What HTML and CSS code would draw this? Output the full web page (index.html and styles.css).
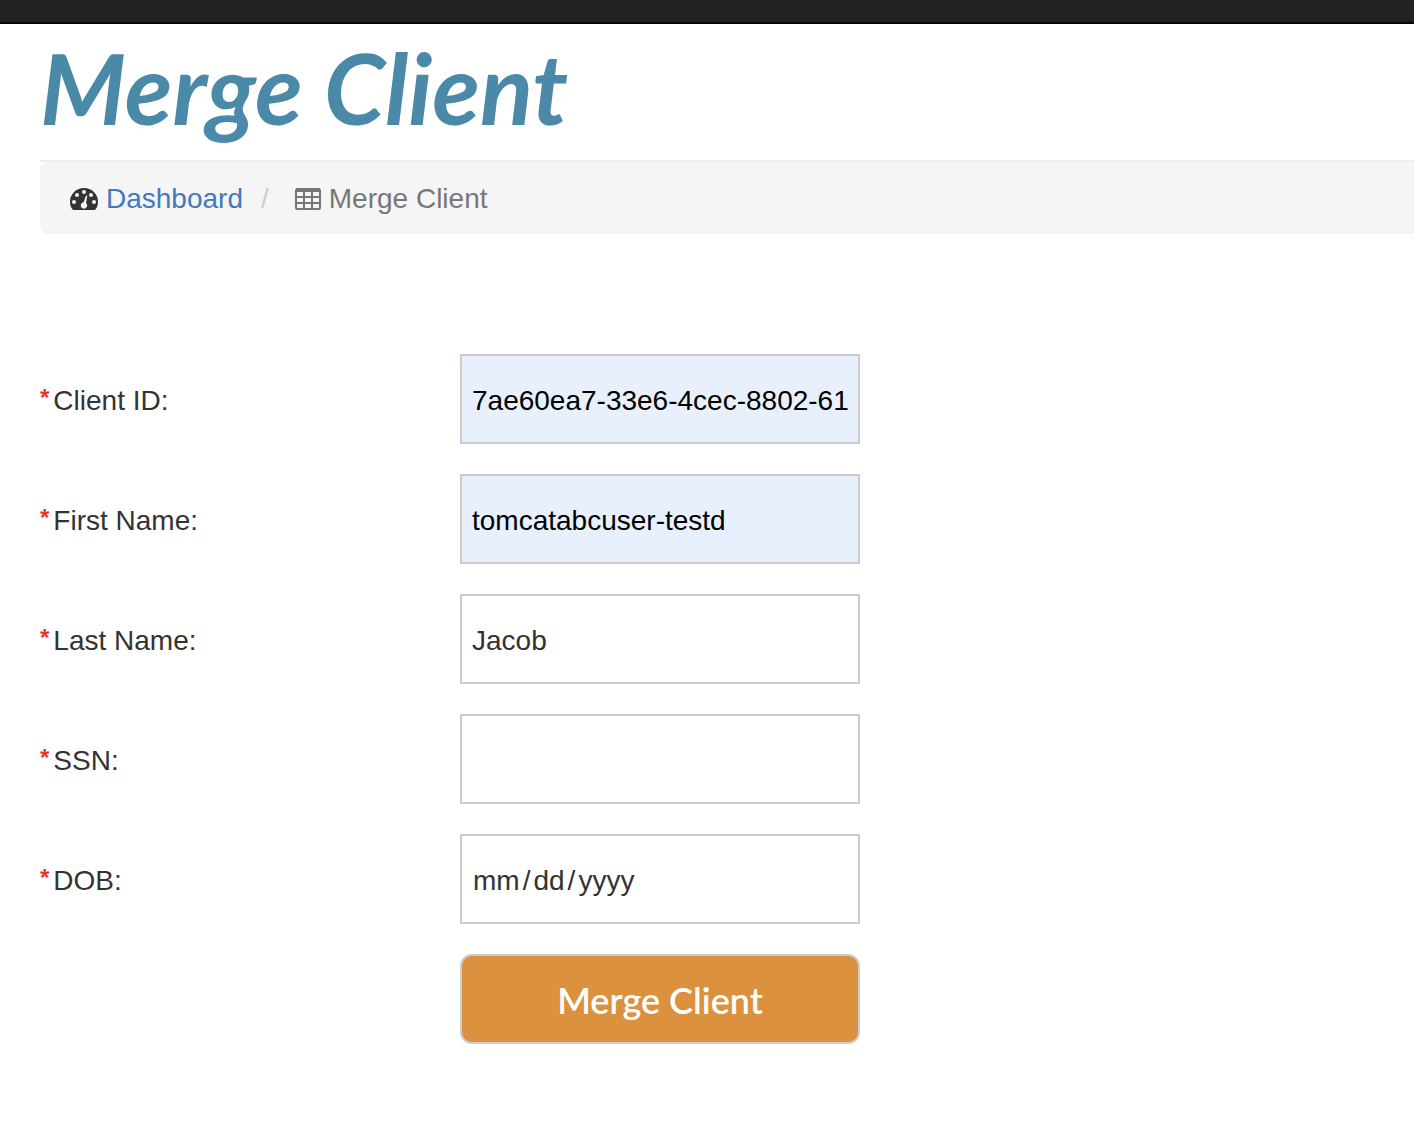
FILE: index.html
```html
<!DOCTYPE html>
<html lang="en">
<head>
<meta charset="utf-8">
<meta name="viewport" content="width=device-width, initial-scale=1">
<title>Merge Client</title>
<link rel="stylesheet" href="styles.css">
</head>
<body>
<header class="navbar"></header>
<main class="content">
  <h1 class="page-title">Merge Client</h1>
  <nav class="breadcrumb" aria-label="Breadcrumb">
    <ol class="breadcrumb-list">
      <li class="crumb">
        <svg class="icon-dashboard" viewBox="0 0 28 22" aria-hidden="true">
          <path fill="#333" d="M3 22C1 20 0 17 0 14a14 14 0 0 1 28 0c0 3-1 6-3 8z"/>
          <g fill="#f5f5f5">
            <circle cx="4" cy="14" r="2"/><circle cx="7" cy="7" r="2"/><circle cx="14" cy="4" r="2"/><circle cx="21" cy="7" r="2"/><circle cx="24" cy="14" r="2"/>
            <path d="M16 7.500l1.300.3-1.300 7.200a3.200 3.200 0 1 1-2.400-.7z"/>
          </g>
        </svg>
        <a class="crumb-link" href="#">Dashboard</a>
      </li>
      <li class="crumb crumb-active" aria-current="page">
        <svg class="icon-table" viewBox="0 0 26 22" aria-hidden="true">
          <rect width="26" height="22" rx="2.500" fill="#777"/>
          <path fill="#f5f5f5" d="M2 4h6v4H2zM10 4h6v4h-6zM18 4h6v4h-6zM2 10h6v4H2zM10 10h6v4h-6zM18 10h6v4h-6zM2 16h6v4H3a1 1 0 0 1-1-1zM10 16h6v4h-6zM18 16h6v3a1 1 0 0 1-1 1h-5z"/>
        </svg>
        <span>Merge Client</span>
      </li>
    </ol>
  </nav>
  <form class="merge-form">
    <div class="row">
      <label class="label" for="client-id"><span class="required">*</span>Client ID:</label>
      <input class="field autofilled" id="client-id" type="text" value="7ae60ea7-33e6-4cec-8802-61">
    </div>
    <div class="row">
      <label class="label" for="first-name"><span class="required">*</span>First Name:</label>
      <input class="field autofilled" id="first-name" type="text" value="tomcatabcuser-testd">
    </div>
    <div class="row">
      <label class="label" for="last-name"><span class="required">*</span>Last Name:</label>
      <input class="field" id="last-name" type="text" value="Jacob">
    </div>
    <div class="row">
      <label class="label" for="ssn"><span class="required">*</span>SSN:</label>
      <input class="field" id="ssn" type="text">
    </div>
    <div class="row">
      <label class="label" for="dob"><span class="required">*</span>DOB:</label>
      <input class="field" id="dob" type="date">
    </div>
    <div class="row">
      <button class="submit" type="button">Merge Client</button>
    </div>
  </form>
</main>
</body>
</html>
```
FILE: styles.css
```css
*, *::before, *::after { box-sizing: border-box; }

body {
  margin: 0;
  background: #fff;
  color: #333;
  font: 28px/40px "Liberation Sans", Arial, sans-serif;
}

.navbar {
  height: 24px;
  background: #222;
  border-bottom: 2px solid #080808;
}

.content { padding-left: 40px; }

.page-title {
  margin: 0;
  padding: 7px 0 17px;
  border-bottom: 2px solid #eee;
  color: #4b89a8;
  font: italic 700 98px/112px Lato, sans-serif;
}

.breadcrumb {
  padding: 17px 30px 15px;
  border-radius: 8px 0 0 8px;
  background: #f5f5f5;
}

.breadcrumb-list {
  display: flex;
  margin: 0;
  padding: 0;
  list-style: none;
}

.crumb {
  display: flex;
  align-items: center;
  gap: 8px;
}

.crumb-active { color: #777; }

.crumb-active::before {
  content: "/";
  padding: 0 18px;
  color: #ccc;
}

.crumb-link {
  color: #4479ba;
  text-decoration: none;
}

.icon-dashboard { width: 28px; height: 22px; }
.icon-table { width: 26px; height: 22px; }

.merge-form {
  display: grid;
  gap: 30px;
  padding: 120px 0 88px;
}

.row {
  display: grid;
  grid-template-columns: 420px 400px;
  align-items: center;
}

.label {
  display: flex;
  gap: 4px;
  padding-top: 3px;
}

.required {
  color: #ee3124;
  font-size: 24px;
  font-weight: 700;
  line-height: 34px;
}

.field {
  width: 100%;
  height: 90px;
  padding: 3px 10px 0;
  border: 2px solid #ccc;
  border-radius: 0;
  background: #fff;
  color: #333;
  font: inherit;
}

.autofilled {
  background: #e8f0fe;
  color: #000;
}

.field::-webkit-datetime-edit-text { padding: 0 2px; }
.field::-webkit-calendar-picker-indicator { display: none; }

.submit {
  grid-column: 2;
  height: 90px;
  padding-top: 3px;
  border: 2px solid #ccc;
  border-radius: 12px;
  background: #db913e;
  color: #fff;
  font: 600 36px/48px Lato, sans-serif;
}
```
